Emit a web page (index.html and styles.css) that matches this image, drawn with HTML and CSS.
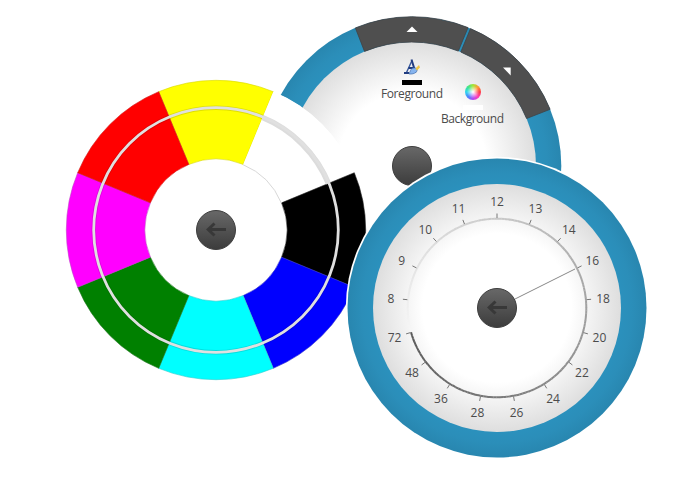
FILE: index.html
```html
<!DOCTYPE html>
<html lang="en">
<head>
<meta charset="utf-8">
<title>Radial menu</title>
<link rel="stylesheet" href="styles.css">
</head>
<body>
<main class="canvas">
  <svg class="dial menu" viewBox="-152 -152 304 304">
    <defs>
      <radialGradient id="rim" gradientUnits="userSpaceOnUse" cx="0" cy="0" r="150">
        <stop offset=".82" stop-color="#2b91bd"/><stop offset=".9" stop-color="#2b8eb9"/><stop offset="1" stop-color="#2886af"/>
      </radialGradient>
      <radialGradient id="face" gradientUnits="userSpaceOnUse" cx="0" cy="0" r="124">
        <stop offset=".6" stop-color="#fff"/><stop offset="1" stop-color="#dedede"/>
      </radialGradient>
      <linearGradient id="hub" x1="0" y1="0" x2="0" y2="1">
        <stop offset="0" stop-color="#686868"/><stop offset="1" stop-color="#3c3c3c"/>
      </linearGradient>
    </defs>
    <circle r="149.3" fill="url(#rim)"/>
    <circle r="124" fill="url(#face)"/>
    <g class="segment">
      <path d="M-56.6-138.1A149.3 149.3 0 0 1 56-138.4L46.3-114.9A124 124 0 0 0-47.5-114.6Z"/>
      <path d="M58.5-137.4A149.3 149.3 0 0 1 138.1-56.7L114.6-47.5A124 124 0 0 0 48.8-114Z"/>
    </g>
    <g class="pointer">
      <path d="M-5.5-134L0-139.500 5.5-134Z"/>
      <path d="M91-98.5H98.7V-90.5Z"/>
    </g>
    <g transform="translate(-8 -107.5)">
      <path d="M2.5 14L8 2" fill="none" stroke="#35569b" stroke-width="1.4"/>
      <path d="M7.5 1L11.5 14M4.5 9.5H11M0 14.5H5" fill="none" stroke="#213c80" stroke-width="2"/>
      <path d="M6.5 12C8 9 10 9 13 10C14 13 11 16 5 15.5Z" fill="#86b4ee" stroke="#426fae" stroke-width=".7"/>
      <path d="M11.5 10L15 6.5 16 9 13 12Z" fill="#efc647"/>
    </g>
    <rect x="-10" y="-86" width="20" height="5"/>
    <text class="label" x="0" y="-68" textLength="62">Foreground</text>
    <foreignObject x="53" y="-82" width="16" height="16"><div class="color-wheel"></div></foreignObject>
    <rect x="51" y="-61" width="20" height="5" fill="#fff"/>
    <text class="label" x="60.5" y="-43" textLength="63">Background</text>
    <circle class="hub" r="19.5"/>
  </svg>

  <svg class="dial palette" viewBox="-152 -152 304 304">
    <circle r="150" fill="#fff"/>
    <g id="wheel"></g>
    <circle class="track-shade" r="122.3"/>
    <path class="track-wide" d="M46.5-112.2A121.5 121.5 0 0 1 112.2-46.5"/>
    <circle class="track" r="122.3"/>
    <circle class="hub" r="19.5"/>
    <path class="arrow" d="M10-.5H-8M-1.5-6.5L-7.8-.5-1.5 5.5"/>
  </svg>

  <svg class="dial gauge" viewBox="-152 -152 304 304">
    <circle r="151.2" fill="#fff"/>
    <circle r="149.5" fill="url(#rim)"/>
    <circle r="124" fill="url(#face)"/>
    <g id="scale"></g>
    <path class="needle" d="M18-9L78-39"/>
    <circle class="hub" r="19.5"/>
    <path class="arrow" d="M10-.5H-8M-1.5-6.5L-7.8-.5-1.5 5.5"/>
  </svg>
</main>
<script src="dials.js"></script>
</body>
</html>
```
FILE: styles.css
```css
body { margin: 0; background: #fff; }
.canvas { position: relative; width: 700px; height: 480px; overflow: hidden; }
.dial { position: absolute; width: 304px; height: 304px; font: 12px "Open Sans", "Noto Sans", sans-serif; }
.menu { left: 260px; top: 14px; }
.palette { left: 64px; top: 78px; }
.gauge { left: 344.5px; top: 155.5px; }
.segment { fill: #4f4f4f; stroke: #3f4346; stroke-width: .8; }
.pointer { fill: #fff; }
.label { fill: #4b4b4b; text-anchor: middle; }
.color-wheel {
  width: 16px; height: 16px; border-radius: 50%;
  background: radial-gradient(circle, #fff 2%, #fff0 55%),
    conic-gradient(#a5e636, #ff9a35, #ff3945, #ff3db7, #b14af4, #4b83ff, #31d7ef, #3de58b, #a5e636);
}
.hub { fill: url(#hub); stroke: #3e3e3e; stroke-width: 1; }
.arrow { fill: none; stroke: #383838; stroke-width: 3; }
.track-shade { fill: none; stroke: #00000020; stroke-width: 4.5; }
.track-wide { fill: none; stroke: #dcdcdc; stroke-width: 5; }
.track { fill: none; stroke: #e0e0e0; stroke-width: 2.8; }
.needle { stroke: #888; stroke-width: 1; }
.tick { stroke: #777; stroke-width: 1; }
.arc { fill: none; stroke-width: 2; }
```
FILE: dials.js
```js
const NS = "http://www.w3.org/2000/svg";
const polar = (r, deg) => {
  const a = deg * Math.PI / 180;
  return [r * Math.sin(a), -r * Math.cos(a)];
};
const add = (parent, name, attrs, text) => {
  const el = document.createElementNS(NS, name);
  for (const key in attrs) el.setAttribute(key, attrs[key]);
  if (text) el.textContent = text;
  parent.append(el);
};

const wheel = document.getElementById("wheel");
const colors = [
  ["#ffff00", "#d6d600"], ["#ffffff", "#dddddd"], ["#000000", "#222222"], ["#0000ff", "#3030c8"],
  ["#00ffff", "#30cccc"], ["#008000", "#167016"], ["#ff00ff", "#c040c8"], ["#ff0000", "#cf1515"]
];
colors.forEach(([fill, edge], i) => {
  const a = i * 45 - 22.5, b = a + 45;
  const d = `M${polar(149.7, a)}A149.7 149.7 0 0 1 ${polar(149.7, b)}L${polar(71, b)}A71 71 0 0 0 ${polar(71, a)}Z`;
  add(wheel, "path", { d, fill, stroke: i === 1 ? "none" : edge, "stroke-width": .6 });
});
add(wheel, "path", { d: `M${polar(70.7, 22.5)}A70.7 70.7 0 0 1 ${polar(70.7, 67.5)}`, fill: "none", stroke: "#d8d8d8" });

const scale = document.getElementById("scale");
const sizes = [8, 9, 10, 11, 12, 13, 14, 16, 18, 20, 22, 24, 26, 28, 36, 48, 72];
const step = 360 / 17;
const start = -4 * step;
const first = -105;
const sweep = start + 16 * step - first;
const parts = 170;
for (let i = 0; i < parts; i++) {
  const a = first + i * sweep / parts, b = first + (i + 1) * sweep / parts;
  const v = Math.round(246 - 158 * i / parts);
  add(scale, "path", { class: "arc", d: `M${polar(89.3, a)}A89.3 89.3 0 0 1 ${polar(89.3, b + .1)}`, stroke: `rgb(${v},${v},${v})` });
}
sizes.forEach((size, i) => {
  const a = start + i * step;
  const [x1, y1] = polar(90, a), [x2, y2] = polar(94.5, a), [x, y] = polar(106.5, a);
  add(scale, "line", { class: "tick", x1, y1, x2, y2 });
  add(scale, "text", { class: "label", x: x, y: y + 4.7 }, String(size));
});
```
